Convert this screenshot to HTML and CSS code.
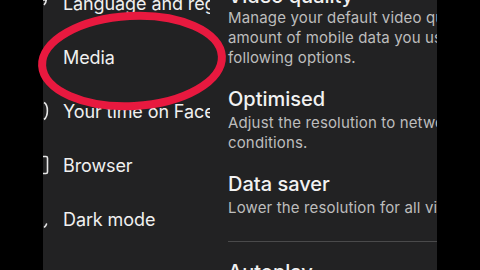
FILE: index.html
```html
<!DOCTYPE html>
<html>
<head>
<meta charset="utf-8">
<link rel="stylesheet" href="styles.css">
</head>
<body>
<div class="screen">
  <div class="panel">
    <nav class="sidebar">
      <div class="item">
        <svg class="icon" viewBox="0 0 8 20"><path d="M1 2 C4 4 4 9 1 12 M0 7 H4" fill="none" stroke="#e6e6e6" stroke-width="1.6"/></svg>
        <span>Language and region</span>
      </div>
      <div class="item">
        <svg class="icon" viewBox="0 0 8 20"></svg>
        <span>Media</span>
      </div>
      <div class="item">
        <svg class="icon" viewBox="0 0 8 20"><path d="M1 1.5 C5.5 4 5.5 15 1 18.5" fill="none" stroke="#e6e6e6" stroke-width="1.6"/></svg>
        <span>Your time on Facebook</span>
      </div>
      <div class="item">
        <svg class="icon" viewBox="0 0 8 20"><path d="M0 1.5 H3 Q4.5 1.5 4.5 3 V17 Q4.5 18.5 3 18.5 H0" fill="none" stroke="#e6e6e6" stroke-width="1.6"/></svg>
        <span>Browser</span>
      </div>
      <div class="item">
        <svg class="icon" viewBox="0 0 8 20"><path d="M3.5 15 Q3 17 1.5 18" fill="none" stroke="#e6e6e6" stroke-width="1.6" stroke-linecap="round"/></svg>
        <span>Dark mode</span>
      </div>
    </nav>
    <main class="content">
      <section class="intro">
        <h2 class="title">Video quality</h2>
        <p class="desc">Manage your default video quality and reduce the<br>amount of mobile data you use by choosing the<br>following options.</p>
      </section>
      <section class="option">
        <h3 class="title">Optimised</h3>
        <p class="desc">Adjust the resolution to network<br>conditions.</p>
      </section>
      <section class="option">
        <h3 class="title">Data saver</h3>
        <p class="desc">Lower the resolution for all videos.</p>
      </section>
      <hr class="divider">
      <section class="option autoplay">
        <h2 class="title">Autoplay</h2>
      </section>
    </main>
  </div>
  <svg class="mark" viewBox="0 0 480 270" width="480" height="270">
    <ellipse cx="132" cy="61" rx="90" ry="45" transform="rotate(-3 132 61)" fill="none" stroke="#e8193f" stroke-width="8"/>
  </svg>
</div>
</body>
</html>
```
FILE: styles.css
```css
* { box-sizing: border-box; }
html, body {
  margin: 0;
  padding: 0;
  background: #000;
}
body {
  width: 480px;
  height: 270px;
  overflow: hidden;
  font-family: Inter, "Noto Sans", "Liberation Sans", sans-serif;
}
.screen {
  position: relative;
  width: 480px;
  height: 270px;
  display: flex;
  justify-content: flex-start;
  padding-left: 43px;
}
.panel {
  width: 394px;
  height: 270px;
  background: #222223;
  display: flex;
  overflow: hidden;
}
.sidebar {
  width: 167px;
  flex: none;
  overflow: hidden;
  margin-top: -24px;
  display: flex;
  flex-direction: column;
}
.item {
  height: 54px;
  display: flex;
  align-items: center;
  white-space: nowrap;
  color: #f0f0f0;
  font-size: 18px;
  letter-spacing: -0.1px;
}
.icon {
  width: 8px;
  height: 20px;
  flex: none;
  margin-right: 12px;
}
.content {
  flex: 1;
  min-width: 0;
  overflow: hidden;
  padding-left: 18px;
  white-space: nowrap;
}
.intro {
  margin-top: -16px;
}
.title {
  margin: 0;
  font-size: 20px;
  line-height: 24px;
  font-weight: 500;
  color: #f2f2f2;
}
.desc {
  margin: 0;
  font-size: 15px;
  line-height: 20px;
  color: #bdbdbd;
  white-space: nowrap;
  letter-spacing: 0.15px;
}
.option {
  margin-top: 19px;
}
.option .desc {
  margin-top: 2px;
}
.divider {
  margin: 23px 0 0 0;
  border: 0;
  height: 1px;
  background: #4a4a4b;
}
.autoplay {
  margin-top: 18px;
}
.mark {
  position: absolute;
  left: 0;
  top: 0;
  pointer-events: none;
}
```
